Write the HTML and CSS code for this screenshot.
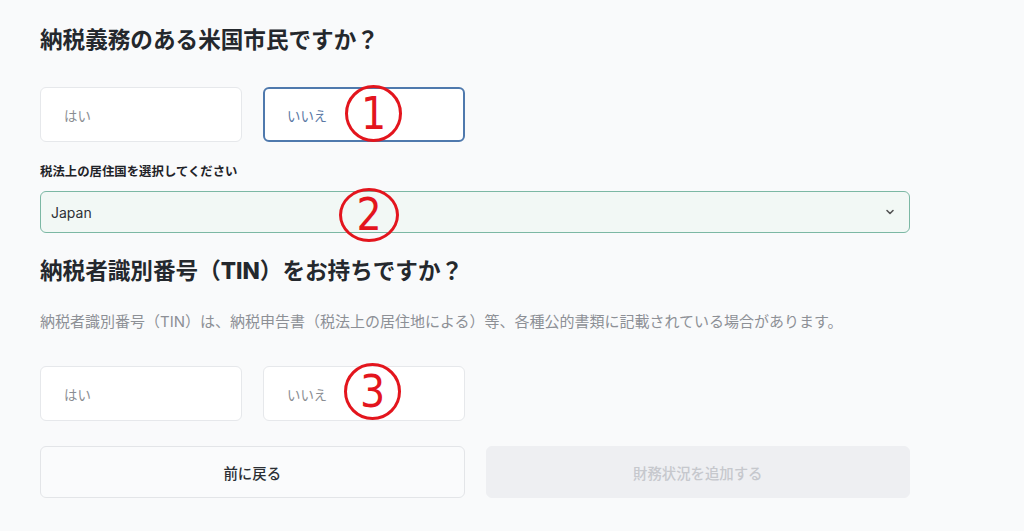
FILE: index.html
```html
<!DOCTYPE html>
<html lang="ja">
<head>
    <meta charset="UTF-8">
    <meta name="viewport" content="width=device-width, initial-scale=1.0">
    <title>税務情報</title>
    <link rel="stylesheet" href="styles.css">
</head>
<body>
    <main class="form">
        <h2 class="question">納税義務のある米国市民ですか？</h2>

        <div class="choices first-choices">
            <button class="choice">はい</button>
            <button class="choice selected">いいえ<span class="mark">1</span></button>
        </div>

        <label class="field-label">税法上の居住国を選択してください</label>
        <div class="select">
            <span>Japan</span>
            <svg class="chevron" width="12" height="12" viewBox="0 0 12 12"><path d="M3 4.5 L6 7.5 L9 4.5" fill="none" stroke="#555" stroke-width="1.6" stroke-linecap="round" stroke-linejoin="round"/></svg>
            <span class="mark mark-2">2</span>
        </div>

        <h2 class="question tin-question">納税者識別番号（<span class="latin">TIN</span>）をお持ちですか？</h2>
        <p class="note">納税者識別番号（TIN）は、納税申告書（税法上の居住地による）等、各種公的書類に記載されている場合があります。</p>

        <div class="choices second-choices">
            <button class="choice">はい</button>
            <button class="choice">いいえ<span class="mark">3</span></button>
        </div>

        <div class="actions">
            <button class="action back">前に戻る</button>
            <button class="action next" disabled>財務状況を追加する</button>
        </div>
    </main>
</body>
</html>
```

FILE: styles.css
```css
body {
    margin: 0;
    background: #f9fafb;
    font-family: Inter, "Noto Sans CJK JP", sans-serif;
    color: #1f2328;
}

.form {
    width: 870px;
    padding: 26px 0 0 40px;
    display: flex;
    flex-direction: column;
}

.question {
    margin: 0;
    font-size: 22.6px;
    font-weight: 700;
    line-height: 28px;
    color: #24282d;
}

.question .latin {
    font-family: Inter, sans-serif;
    font-weight: 800;
}

.choices {
    display: flex;
    gap: 21px;
}

.first-choices {
    margin-top: 33px;
}

.choice {
    position: relative;
    width: 202px;
    height: 55px;
    padding: 0 0 0 23px;
    text-align: left;
    background: #fff;
    border: 1px solid #e6e8eb;
    border-radius: 6px;
    font-family: Inter, "Noto Sans CJK JP", sans-serif;
    font-size: 13.4px;
    color: #8a8d92;
}

.choice.selected {
    border: 2px solid #4f79ad;
    padding-left: 22px;
    color: #5a78a4;
}

.field-label {
    margin-top: 21px;
    font-size: 12.4px;
    font-weight: 700;
    line-height: 18px;
    color: #1f2328;
}

.select {
    position: relative;
    margin-top: 10px;
    height: 40px;
    display: flex;
    align-items: center;
    justify-content: space-between;
    padding: 0 13px 0 10px;
    background: #f2f8f5;
    border: 1px solid #7cb8a4;
    border-radius: 6px;
    font-size: 14px;
    color: #2d3136;
}

.tin-question {
    margin-top: 24px;
}

.note {
    margin: 27px 0 0;
    font-size: 15px;
    line-height: 20px;
    color: #8d9096;
}

.second-choices {
    margin-top: 34px;
}

.actions {
    margin-top: 25px;
    display: flex;
    gap: 21px;
}

.action {
    flex: 1;
    height: 52px;
    border-radius: 6px;
    font-family: Inter, "Noto Sans CJK JP", sans-serif;
    font-size: 14.4px;
    font-weight: 500;
}

.back {
    background: #fafbfc;
    border: 1px solid #e3e5e8;
    color: #2b2f34;
}

.next {
    background: #eeeff2;
    border: 1px solid #eeeff2;
    color: #c6c8cd;
}

/* red annotation circles */
.mark {
    position: absolute;
    top: -4px;
    left: 80px;
    width: 51px;
    height: 51px;
    border: 3px solid #e3151d;
    border-radius: 50%;
    display: flex;
    align-items: center;
    justify-content: center;
    font-family: "DejaVu Sans Condensed", "DejaVu Sans", sans-serif;
    font-size: 44px;
    font-weight: 400;
    line-height: 1;
    color: #e3151d;
}

.mark-2 {
    top: -4px;
    left: 298px;
    width: 54px;
    height: 48px;
}
```
